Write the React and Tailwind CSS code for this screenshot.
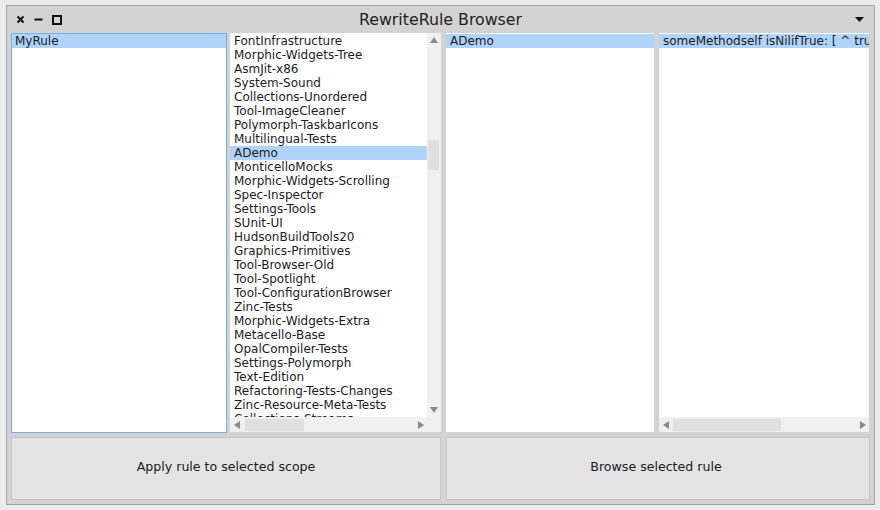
const packages = [
	"FontInfrastructure",
	"Morphic-Widgets-Tree",
	"AsmJit-x86",
	"System-Sound",
	"Collections-Unordered",
	"Tool-ImageCleaner",
	"Polymorph-TaskbarIcons",
	"Multilingual-Tests",
	"ADemo",
	"MonticelloMocks",
	"Morphic-Widgets-Scrolling",
	"Spec-Inspector",
	"Settings-Tools",
	"SUnit-UI",
	"HudsonBuildTools20",
	"Graphics-Primitives",
	"Tool-Browser-Old",
	"Tool-Spotlight",
	"Tool-ConfigurationBrowser",
	"Zinc-Tests",
	"Morphic-Widgets-Extra",
	"Metacello-Base",
	"OpalCompiler-Tests",
	"Settings-Polymorph",
	"Text-Edition",
	"Refactoring-Tests-Changes",
	"Zinc-Resource-Meta-Tests",
	"Collections-Streams",
	"Kernel-Tests",
]

const font = { fontFamily: '"DejaVu Sans", sans-serif' }

// little scrollbar arrows
const Arrow = ({ dir }) => {
	const points = {
		up: "1,8 9,8 5,2",
		down: "1,2 9,2 5,8",
		left: "8,1 8,9 2,5",
		right: "2,1 2,9 8,5",
	}
	return (
		<svg width="10" height="10" viewBox="0 0 10 10" className="flex-none">
			<polygon points={points[dir]} fill="#8a8a8a" />
		</svg>
	)
}

const Row = ({ text, selected, pad = "pl-[4px]" }) => (
	<div
		className={
			"h-[14px] leading-[14px] text-[12px] whitespace-nowrap text-[#1b1b26] " +
			pad +
			(selected ? " bg-[#b0d4f8]" : "")
		}
	>
		{text}
	</div>
)

const HScroll = ({ thumbLeft, thumbWidth, className = "" }) => (
	<div className={"flex items-center h-[15px] bg-[#f0f0f0] " + className}>
		<div className="w-[13px] flex justify-center">
			<Arrow dir="left" />
		</div>
		<div className="flex-1 h-[12px] relative">
			<div
				className="absolute top-0 h-[12px] bg-[#e0e0e0]"
				style={{ left: thumbLeft, width: thumbWidth }}
			/>
		</div>
		<div className="w-[13px] flex justify-center">
			<Arrow dir="right" />
		</div>
	</div>
)

export default function App() {
	return (
		<div className="w-[880px] h-[510px] bg-[#ececec] pt-[5px] pl-[6px]" style={font}>
			<div className="w-[869px] h-[500px] border border-[#a4a4a4] bg-[#d3d3d3] flex flex-col">
				{/* title bar */}
				<div className="h-[27px] flex items-center relative flex-none">
					<div className="flex items-center pl-[9px] gap-[9px]">
						<svg width="9" height="9" viewBox="0 0 9 9">
							<path d="M1.5 1.5 L7.5 7.5 M7.5 1.5 L1.5 7.5" stroke="#111" strokeWidth="2" />
						</svg>
						<svg width="9" height="9" viewBox="0 0 9 9">
							<path d="M0.5 4.5 L8.5 4.5" stroke="#111" strokeWidth="2" />
						</svg>
						<svg width="10" height="10" viewBox="0 0 10 10">
							<rect x="1" y="1" width="8" height="8" fill="none" stroke="#111" strokeWidth="2" />
						</svg>
					</div>
					<div className="absolute left-0 right-0 text-center text-[15.8px] text-[#222] pointer-events-none">
						RewriteRule Browser
					</div>
					<div className="ml-auto pr-[10px]">
						<svg width="9" height="6" viewBox="0 0 9 6">
							<polygon points="0,0 9,0 4.5,5" fill="#111" />
						</svg>
					</div>
				</div>

				{/* panels */}
				<div className="flex px-[4px] h-[400px] flex-none">
					<div className="w-[216px] h-[400px] bg-white border border-[#78aee4]">
						<Row text="MyRule" selected pad="pl-[3px]" />
					</div>

					<div className="ml-[3px] w-[211px] h-[399px] flex flex-col">
						<div className="flex flex-1 min-h-0">
							<div className="w-[197px] bg-white overflow-hidden pt-[1px]">
								{packages.map((name) => (
									<Row key={name} text={name} selected={name === "ADemo"} />
								))}
							</div>
							<div className="w-[14px] bg-[#f0f0f0] flex flex-col items-center">
								<div className="h-[14px] flex items-center">
									<Arrow dir="up" />
								</div>
								<div className="flex-1 w-full relative">
									<div className="absolute left-[1px] right-[2px] top-[93px] h-[30px] bg-[#e0e0e0]" />
								</div>
								<div className="h-[14px] flex items-center">
									<Arrow dir="down" />
								</div>
							</div>
						</div>
						<div className="flex">
							<HScroll thumbLeft={2} thumbWidth={59} className="w-[197px]" />
							<div className="w-[14px] h-[15px] bg-[#f0f0f0]" />
						</div>
					</div>

					<div className="ml-[5px] w-[208px] h-[399px] bg-white pt-[1px]">
						<Row text="ADemo" selected />
					</div>

					<div className="ml-[5px] w-[210px] h-[399px] flex flex-col">
						<div className="flex-1 bg-white overflow-hidden pt-[1px]">
							<Row text="someMethodself isNilifTrue: [ ^ true ]" selected />
						</div>
						<HScroll thumbLeft={1} thumbWidth={108} />
					</div>
				</div>

				{/* buttons */}
				<div className="flex px-[4px] pt-[4px] gap-[5px]">
					<button className="w-[430px] h-[63px] pb-[2px] bg-[#e4e4e4] border border-[#c6c6c6] text-[12.6px] text-[#1b1b26]">
						Apply rule to selected scope
					</button>
					<button className="w-[424px] h-[63px] pb-[2px] pr-[4px] bg-[#e4e4e4] border border-[#c6c6c6] text-[12.6px] text-[#1b1b26]">
						Browse selected rule
					</button>
				</div>
			</div>
		</div>
	)
}
